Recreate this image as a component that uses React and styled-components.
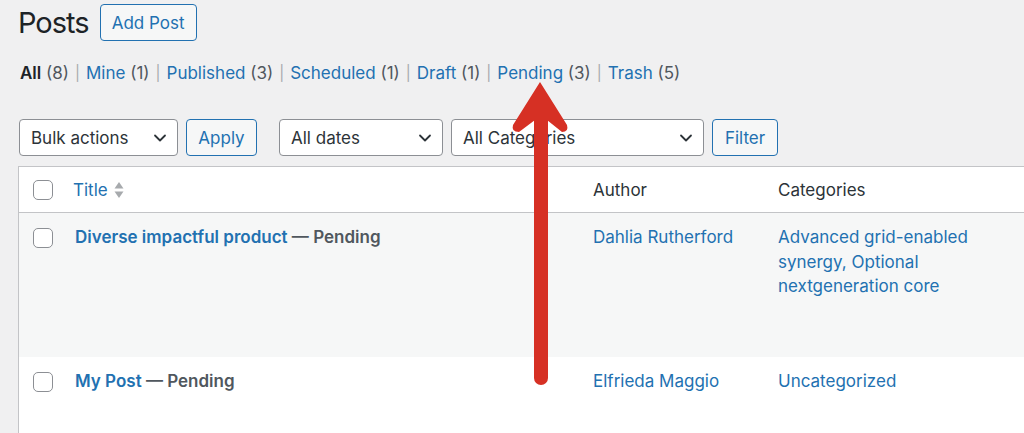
import React from 'react';
import styled, { createGlobalStyle } from 'styled-components';

const GlobalStyle = createGlobalStyle`
  html, body {
    margin: 0;
    padding: 0;
    background: #f0f0f1;
    overflow: hidden;
  }
  body {
    font-family: Inter, "Noto Sans", sans-serif;
    color: #3c434a;
  }
`;

const statuses = [
  { label: 'All', count: 8, current: true },
  { label: 'Mine', count: 1 },
  { label: 'Published', count: 3 },
  { label: 'Scheduled', count: 1 },
  { label: 'Draft', count: 1 },
  { label: 'Pending', count: 3 },
  { label: 'Trash', count: 5 },
];

const posts = [
  {
    title: 'Diverse impactful product',
    author: 'Dahlia Rutherford',
    categories: 'Advanced grid-enabled synergy, Optional nextgeneration core',
    height: 144,
    alt: true,
  },
  {
    title: 'My Post',
    author: 'Elfrieda Maggio',
    categories: 'Uncategorized',
    height: 120,
  },
];

const Chevron = () => (
  <svg width="14" height="14" viewBox="0 0 14 14">
    <path d="M2 4.5 L7 9.5 L12 4.5" fill="none" stroke="#2c3338" strokeWidth="1.8" strokeLinecap="round" strokeLinejoin="round" />
  </svg>
);

const SortIcon = () => (
  <svg width="10" height="18" viewBox="0 0 10 18">
    <path d="M5 1 L9.5 7.5 L0.5 7.5 Z" fill="#a7aaad" />
    <path d="M5 17 L9.5 10.5 L0.5 10.5 Z" fill="#a7aaad" />
  </svg>
);

// the red annotation arrow drawn over the page
const Arrow = () => (
  <ArrowSvg width="80" height="320" viewBox="0 0 80 320">
    <line x1="41" y1="40" x2="41" y2="298" stroke="#d63024" strokeWidth="14" strokeLinecap="round" />
    <path d="M40 2 L67 45 Q69 52 62 52 L47 40 L35 40 L19 52 Q11 52 13 45 Z" fill="#d63024" />
  </ArrowSvg>
);

const App = () => {
  return (
    <>
      <GlobalStyle />
      <Page>
        <Header>
          <Heading>Posts</Heading>
          <OutlineButton $w={97} $h={37}>Add Post</OutlineButton>
        </Header>

        <StatusList>
          {statuses.map((s, i) => (
            <li key={s.label}>
              {i > 0 && <Sep>|</Sep>}
              <StatusLink $current={s.current}>{s.label}</StatusLink>
              <Count> ({s.count})</Count>
            </li>
          ))}
        </StatusList>

        <Toolbar>
          <Select $w={159}>Bulk actions<Chevron /></Select>
          <OutlineButton $w={71} $h={37}>Apply</OutlineButton>
          <Spacer />
          <Select $w={164}>All dates<Chevron /></Select>
          <Select $w={253}>All Categories<Chevron /></Select>
          <OutlineButton $w={66} $h={37}>Filter</OutlineButton>
        </Toolbar>

        <Table>
          <HeadRow>
            <CheckCell><Checkbox /></CheckCell>
            <HeadCell>
              <SortLink>Title<SortIcon /></SortLink>
            </HeadCell>
            <HeadCell>Author</HeadCell>
            <HeadCell>Categories</HeadCell>
          </HeadRow>
          {posts.map((p) => (
            <BodyRow key={p.title} $alt={p.alt} $h={p.height}>
              <CheckCell><Checkbox /></CheckCell>
              <Cell>
                <PostTitle>
                  <a>{p.title}</a> — Pending
                </PostTitle>
              </Cell>
              <Cell><TextLink>{p.author}</TextLink></Cell>
              <Cell><TextLink>{p.categories}</TextLink></Cell>
            </BodyRow>
          ))}
        </Table>

        <Arrow />
      </Page>
    </>
  );
};

const Page = styled.div`
  position: relative;
  padding: 4px 0 0 18px;
  height: 429px;
  width: 1100px;
`;

const Header = styled.div`
  display: flex;
  align-items: center;
  gap: 11px;
`;

const Heading = styled.h1`
  margin: 0;
  font-size: 29px;
  font-weight: 400;
  color: #1d2327;
  letter-spacing: -1px;
`;

const OutlineButton = styled.button`
  box-sizing: border-box;
  width: ${(p) => p.$w}px;
  height: ${(p) => p.$h}px;
  border: 1.5px solid #2271b1;
  border-radius: 4px;
  background: #f6f7f7;
  color: #2271b1;
  font-family: inherit;
  font-size: 17px;
  padding: 0;
  flex: none;
`;

const StatusList = styled.ul`
  list-style: none;
  display: flex;
  margin: 20px 0 0 2px;
  padding: 0;
  font-size: 17px;
  line-height: 24px;

  li {
    display: flex;
    white-space: pre;
  }
`;

const Sep = styled.span`
  color: #a7aaad;
  margin: 0 6px;
  font-size: 15px;
`;

const StatusLink = styled.a`
  color: ${(p) => (p.$current ? '#1d2327' : '#2271b1')};
  font-weight: ${(p) => (p.$current ? 600 : 400)};
`;

const Count = styled.span`
  color: #50575e;
`;

const Toolbar = styled.div`
  display: flex;
  align-items: center;
  gap: 8px;
  margin-top: 34px;
  margin-left: 1px;
`;

const Spacer = styled.div`
  width: 6px;
`;

const Select = styled.div`
  box-sizing: border-box;
  width: ${(p) => p.$w}px;
  height: 37px;
  display: flex;
  align-items: center;
  justify-content: space-between;
  padding: 0 10px 0 11px;
  background: #fff;
  border: 1px solid #8c8f94;
  border-radius: 4px;
  color: #2c3338;
  font-size: 17px;
  flex: none;
`;

const Table = styled.div`
  margin-top: 10px;
  background: #fff;
  border: 1px solid #c3c4c7;
  border-right: none;
`;

const rowGrid = `
  display: grid;
  grid-template-columns: 44px 520px 185px 220px 1fr;
`;

const HeadRow = styled.div`
  ${rowGrid}
  height: 45px;
  align-items: center;
  border-bottom: 1px solid #c3c4c7;
`;

const BodyRow = styled.div`
  ${rowGrid}
  height: ${(p) => p.$h}px;
  background: ${(p) => (p.$alt ? '#f6f7f7' : '#fff')};
`;

const CheckCell = styled.div`
  padding-left: 14px;
  display: flex;
  align-items: flex-start;

  ${BodyRow} & {
    padding-top: 15px;
  }
`;

const Checkbox = styled.span`
  box-sizing: border-box;
  display: block;
  width: 20px;
  height: 20px;
  border: 1.5px solid #8c8f94;
  border-radius: 5px;
  background: #fff;
`;

const HeadCell = styled.div`
  padding: 0 10px;
  font-size: 17px;
  color: #2c3338;
`;

const SortLink = styled.a`
  display: inline-flex;
  align-items: center;
  gap: 6px;
  color: #2271b1;
`;

const Cell = styled.div`
  padding: 12px 10px 0;
  font-size: 17px;
  line-height: 24.5px;
`;

const PostTitle = styled.strong`
  font-weight: 600;
  color: #50575e;
  padding-left: 2px;

  a {
    color: #2271b1;
  }
`;

const TextLink = styled.a`
  color: #2271b1;
`;

const ArrowSvg = styled.svg`
  position: absolute;
  left: 500px;
  top: 80px;
  pointer-events: none;
`;

export default App;
